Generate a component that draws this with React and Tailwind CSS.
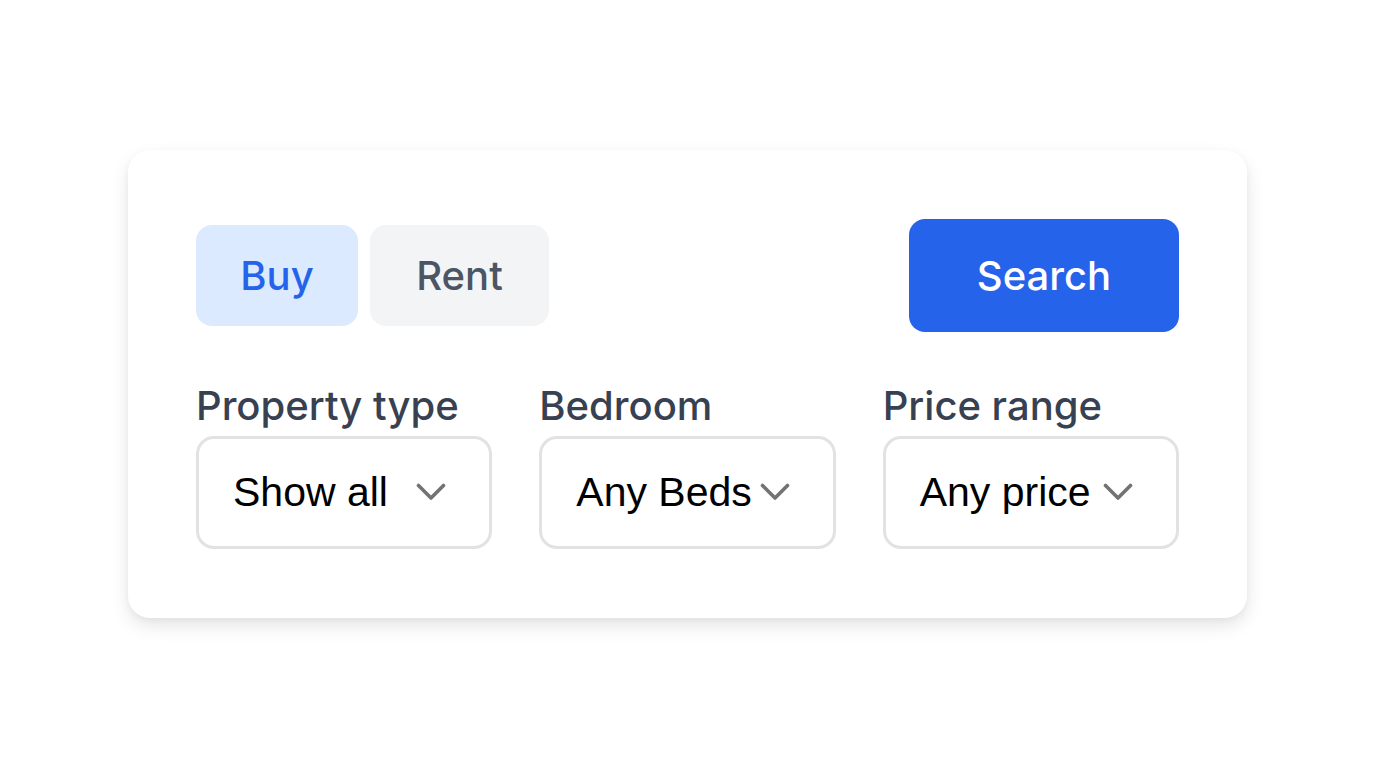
import React from "react";

function Chevron() {
  return (
    <svg width="30" height="18" viewBox="0 0 30 18" fill="none" className="shrink-0 block">
      <path d="M2.5 2.5 L15 15 L27.5 2.5" stroke="#737373" strokeWidth="3.6" strokeLinecap="round" strokeLinejoin="round" />
    </svg>
  );
}

function Field({ label, value }) {
  return (
    <div className="flex flex-col">
      <div className="text-[40px] leading-[46px] font-medium text-[#374151] mb-[7px]" style={{ fontFamily: "Inter, sans-serif" }}>
        {label}
      </div>
      <div className="relative h-[113px] rounded-[18px] border-[3px] border-[#e2e2e2] bg-white flex items-center pl-[34px]">
        <span className="text-[41px] leading-none text-black whitespace-nowrap" style={{ fontFamily: '"Liberation Sans", Arial, sans-serif' }}>
          {value}
        </span>
        <div className="absolute right-[43px] top-[44px] pointer-events-none">
          <Chevron />
        </div>
      </div>
    </div>
  );
}

export default function App() {
  return (
    <div className="w-[1376px] h-[768px] bg-white flex items-start pl-[128px] pt-[150px]" style={{ fontFamily: "Inter, sans-serif" }}>
      <div className="w-[1119px] rounded-[22px] bg-white px-[68px] pt-[69px] pb-[69px] shadow-[0_8px_18px_rgba(0,0,0,0.10),0_2px_6px_rgba(0,0,0,0.04)]">
        <div className="flex items-center justify-between">
          <div className="flex gap-[12px]">
            <button className="w-[162px] h-[101px] rounded-[16px] bg-[#dbeafe] text-[#2563eb] text-[40px] font-medium">Buy</button>
            <button className="w-[179px] h-[101px] rounded-[16px] bg-[#f3f4f6] text-[#4b5563] text-[40px] font-medium">Rent</button>
          </div>
          <button className="w-[270px] h-[113px] rounded-[16px] bg-[#2563eb] text-white text-[40px] font-medium">Search</button>
        </div>
        <div className="grid grid-cols-3 gap-[47px] mt-[51px]">
          <Field label="Property type" value="Show all" />
          <Field label="Bedroom" value="Any Beds" />
          <Field label="Price range" value="Any price" />
        </div>
      </div>
    </div>
  );
}
